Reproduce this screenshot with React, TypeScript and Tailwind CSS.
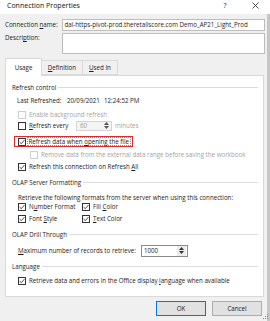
import React from "react";

function Check({ checked = false, disabled = false }: { checked?: boolean; disabled?: boolean }) {
  return (
    <span
      className={`flex h-[8px] w-[8px] shrink-0 items-center justify-center border bg-white ${
        disabled ? "border-[#cfcfcf]" : "border-[#333333]"
      }`}
    >
      {checked && (
        <svg width="6" height="6" viewBox="0 0 6 6">
          <path d="M0.6 3.1 L2.3 4.7 L5.4 1.1" fill="none" stroke="#222222" strokeWidth="0.8" />
        </svg>
      )}
    </span>
  );
}

function Arrows({ color = "#333333" }: { color?: string }) {
  return (
    <div className="flex h-full w-[9px] flex-col items-center justify-center gap-[1px]">
      <svg width="5" height="3" viewBox="0 0 5 3">
        <path d="M0 3 L2.5 0 L5 3 Z" fill={color} />
      </svg>
      <svg width="5" height="3" viewBox="0 0 5 3">
        <path d="M0 0 L2.5 3 L5 0 Z" fill={color} />
      </svg>
    </div>
  );
}

function Header({ text }: { text: string }) {
  return (
    <div className="flex h-[9px] items-center gap-[2px]">
      <span className="whitespace-nowrap">{text}</span>
      <div className="h-px flex-1 bg-[#dcdcdc]" />
    </div>
  );
}

export default function App() {
  return (
    <div className="relative flex h-[321px] w-[270px] flex-col overflow-hidden bg-[#f0f0f0] font-['Open_Sans',sans-serif] text-[6.2px] leading-[8px] text-[#1b1b1b]">
      {/* Title bar */}
      <div className="flex h-[14px] shrink-0 items-start bg-white pt-[1px]">
        <span className="pl-[7px] text-[7px] leading-[9px] text-[#111111]">Connection Properties</span>
        <span className="ml-auto w-[8px] text-center text-[7px] leading-[9px]">?</span>
        <span className="ml-[22px] mr-[11px] flex h-[9px] w-[8px] items-center justify-center">
          <svg width="7" height="7" viewBox="0 0 7 7">
            <path d="M0.5 0.5 L6.5 6.5 M6.5 0.5 L0.5 6.5" stroke="#222222" strokeWidth="0.8" />
          </svg>
        </span>
      </div>

      <div className="flex flex-1 flex-row">
        <div className="flex w-[267px] flex-col pl-[5px] pt-[5px]">
          {/* Connection name */}
          <div className="flex h-[12px] items-center">
            <span className="w-[57px] whitespace-nowrap">
              Connection <u>n</u>ame:
            </span>
            <div className="flex h-[12px] w-[203px] items-center whitespace-nowrap border border-[#bdbdbd] bg-white pl-[1.5px]">
              dal-https-pivot-prod.theretailscore.com Demo_AP21_Light_Prod
            </div>
          </div>
          {/* Description */}
          <div className="mt-[2px] flex items-start">
            <span className="w-[57px] pt-[1px]">
              Descri<u>p</u>tion:
            </span>
            <div className="h-[21px] w-[203px] border border-[#bdbdbd] bg-white" />
          </div>

          {/* Tabs */}
          <div className="mt-[4px] flex h-[17px] items-end">
            <div className="relative z-10 -mb-px flex h-[18px] w-[37px] justify-center border border-b-0 border-[#d9d9d9] bg-white pt-[5px]">
              Usage
            </div>
            <div className="flex h-[15px] w-[41px] items-center justify-center border border-l-0 border-[#d9d9d9] bg-[#f0f0f0]">
              <span>
                <u>D</u>efinition
              </span>
            </div>
            <div className="flex h-[15px] w-[35px] items-center justify-center border border-l-0 border-[#d9d9d9] bg-[#f0f0f0]">
              <span>
                <u>U</u>sed In
              </span>
            </div>
          </div>

          {/* Panel */}
          <div className="flex h-[222px] w-[259px] flex-col border border-[#d9d9d9] bg-white pl-[6px] pr-[5px] pt-[7px]">
            <Header text="Refresh control" />
            <div className="ml-[5px] mt-[4px] flex h-[9px] items-center whitespace-nowrap">
              <span className="w-[50px]">Last Refreshed:</span>
              <span className="w-[37px]">20/09/2021</span>
              <span>12:24:52 PM</span>
            </div>
            <div className="ml-[6px] mt-[5px] flex h-[9px] items-center gap-[3px] text-[#a3a3a3]">
              <Check disabled />
              <span>Enable background refresh</span>
            </div>
            <div className="ml-[6px] mt-[2px] flex h-[9px] items-center">
              <Check />
              <span className="ml-[3px] w-[47px] whitespace-nowrap">
                <u>R</u>efresh every
              </span>
              <div className="flex h-[10px] w-[36px] items-center border border-[#d4d4d4] bg-[#f4f4f4] text-[#a0a0a0]">
                <span className="flex-1 pl-[3px]">60</span>
                <Arrows color="#555555" />
              </div>
              <span className="ml-[3px] text-[#a3a3a3]">minutes</span>
            </div>
            <div className="mt-[6px] flex">
              <div className="ml-[2px] flex h-[11px] items-center border-[1.5px] border-[#e3262a] pl-[2.5px] pr-[1px]">
                <Check checked />
                <span className="ml-[1.5px] whitespace-nowrap border border-dotted border-[#8c8c8c] px-[0.5px] leading-[7px]">
                  Refresh data when <u>o</u>pening the file
                </span>
              </div>
            </div>
            <div className="ml-[18px] mt-[3px] flex h-[9px] items-center gap-[3px] whitespace-nowrap text-[#a3a3a3]">
              <Check disabled />
              <span>Remove data from the external data range before saving the workbook</span>
            </div>
            <div className="ml-[6px] mt-[3px] flex h-[9px] items-center gap-[3px]">
              <Check checked />
              <span>
                Refresh this connection on Refresh <u>A</u>ll
              </span>
            </div>

            <div className="mt-[7px]">
              <Header text="OLAP Server Formatting" />
            </div>
            <div className="ml-[6px] mt-[6px] flex h-[9px] items-center whitespace-nowrap">
              Retrieve the following formats from the server when using this connection:
            </div>
            <div className="ml-[6px] grid grid-cols-[64px_1fr] gap-y-[3px]">
              <div className="flex h-[9px] items-center gap-[3px]">
                <Check checked />
                <span>
                  N<u>u</u>mber Format
                </span>
              </div>
              <div className="flex h-[9px] items-center gap-[3px]">
                <Check checked />
                <span>
                  Fill <u>C</u>olor
                </span>
              </div>
              <div className="flex h-[9px] items-center gap-[3px]">
                <Check checked />
                <span>
                  Font <u>S</u>tyle
                </span>
              </div>
              <div className="flex h-[9px] items-center gap-[3px]">
                <Check checked />
                <span>
                  <u>T</u>ext Color
                </span>
              </div>
            </div>

            <div className="mt-[7px]">
              <Header text="OLAP Drill Through" />
            </div>
            <div className="ml-[6px] mt-[7px] flex h-[9px] items-center">
              <span className="whitespace-nowrap">
                <u>M</u>aximum number of records to retrieve:
              </span>
              <div className="ml-[5px] flex h-[12px] w-[47px] items-center border border-[#8a8a8a] bg-white">
                <span className="flex-1 pl-[2px]">1000</span>
                <div className="mr-[1px] h-[10px] bg-[#ececec]">
                  <Arrows color="#333333" />
                </div>
              </div>
            </div>

            <div className="mt-[7px]">
              <Header text="Language" />
            </div>
            <div className="ml-[6px] mt-[5px] flex h-[9px] items-center gap-[3px] whitespace-nowrap">
              <Check checked />
              <span>
                Retrieve data and errors in the Office display <u>l</u>anguage when available
              </span>
            </div>
          </div>

          {/* Buttons */}
          <div className="mt-[4px] flex justify-end pr-[5px]">
            <div className="flex h-[15px] w-[50px] items-center justify-center border border-[#0078d7] bg-[#e1e1e1]">
              OK
            </div>
            <div className="ml-[6px] flex h-[15px] w-[50px] items-center justify-center border border-[#adadad] bg-[#e1e1e1]">
              Cancel
            </div>
          </div>
        </div>
        <div className="w-[3px] bg-[#c6c6c6]" />
      </div>

      {/* resize grip */}
      <svg className="absolute bottom-[1px] right-[1px]" width="7" height="7" viewBox="0 0 7 7">
        <rect x="5" y="1" width="1" height="1" fill="#8a8a8a" />
        <rect x="3" y="3" width="1" height="1" fill="#8a8a8a" />
        <rect x="5" y="3" width="1" height="1" fill="#8a8a8a" />
        <rect x="1" y="5" width="1" height="1" fill="#8a8a8a" />
        <rect x="3" y="5" width="1" height="1" fill="#8a8a8a" />
        <rect x="5" y="5" width="1" height="1" fill="#8a8a8a" />
      </svg>
    </div>
  );
}
